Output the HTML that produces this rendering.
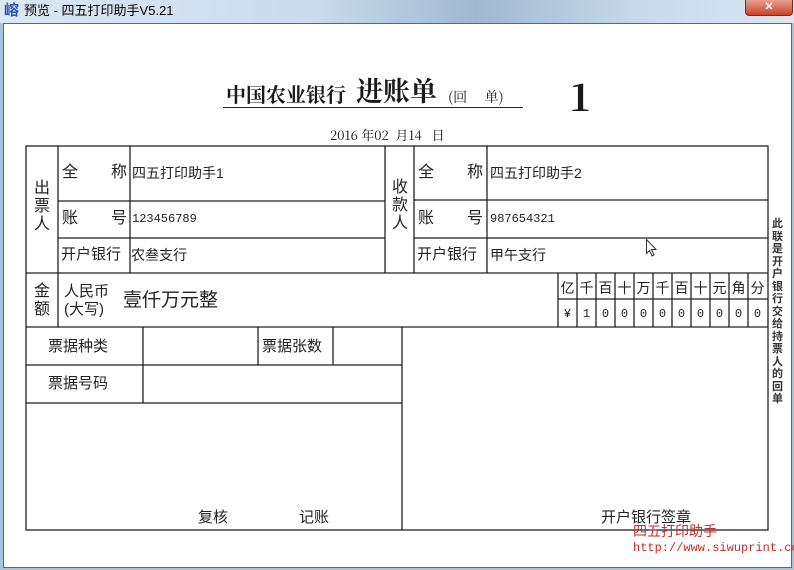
<!DOCTYPE html>
<html><head><meta charset="utf-8"><style>
body{margin:0;width:794px;height:570px;overflow:hidden;background:#a9c3dc;font-family:"Liberation Sans","Noto Sans CJK SC",sans-serif;position:relative}
.t{position:absolute;white-space:nowrap;color:#222;line-height:1}
.s{font-family:"Noto Serif CJK SC","Liberation Serif",serif}
</style></head><body>
<div style="position:absolute;left:0;top:0;width:794px;height:23px;background:linear-gradient(90deg,#dbe8f4 0%,#c9dbec 40%,#9fb8d0 60%,#c7d9ea 80%,#dbe7f3 100%)"></div>
<div class="t" style="left:4px;top:3px;font-size:15px;color:#2a4fb0;font-weight:bold">嵱</div>
<div class="t" style="left:24px;top:4px;font-size:13px;color:#000">预览 - 四五打印助手V5.21</div>
<div style="position:absolute;left:745px;top:0;width:46px;height:15px;background:linear-gradient(#e9a08f,#c8412a);border:1px solid #7a2a20;border-top:none;border-radius:0 0 4px 4px;color:#fff;font-size:11px;text-align:center;line-height:14px;font-weight:bold">✕</div>
<div style="position:absolute;left:3px;top:23px;width:787px;height:543px;background:#fff;border:1px solid #55677a"></div>

<div class="t s" style="left:226px;top:84px;font-size:20px;font-weight:bold;color:#1a1a1a">中国农业银行</div>
<div class="t s" style="left:356px;top:76px;font-size:27px;font-weight:bold;color:#1a1a1a">进账单</div>
<div class="t s" style="left:448px;top:90px;font-size:14px;color:#1a1a1a">(回　 单)</div>
<div style="position:absolute;left:223px;top:107px;width:300px;height:1px;background:#222"></div>
<div class="t s" style="left:569px;top:76px;font-size:38px;font-weight:bold;color:#1a1a1a">1</div>
<div class="t s" style="left:330px;top:128px;font-size:13px;color:#111">2016 年02 &nbsp;月14 &nbsp;&nbsp;日</div>

<svg width="794" height="570" style="position:absolute;left:0;top:0" stroke="#222" stroke-width="1.3" fill="none">
<rect x="26" y="146" width="742" height="384"/>
<line x1="26" y1="273" x2="768" y2="273"/>
<line x1="26" y1="327" x2="768" y2="327"/>
<line x1="58" y1="146" x2="58" y2="327"/>
<line x1="130" y1="146" x2="130" y2="273"/>
<line x1="385" y1="146" x2="385" y2="273"/>
<line x1="414" y1="146" x2="414" y2="273"/>
<line x1="487" y1="146" x2="487" y2="273"/>
<line x1="58" y1="201" x2="385" y2="201"/>
<line x1="58" y1="238" x2="385" y2="238"/>
<line x1="414" y1="200" x2="768" y2="200"/>
<line x1="414" y1="238" x2="768" y2="238"/>
<line x1="558" y1="299" x2="768" y2="299"/>
<line x1="558" y1="273" x2="558" y2="327"/>
<line x1="577" y1="273" x2="577" y2="327"/><line x1="596" y1="273" x2="596" y2="327"/><line x1="615" y1="273" x2="615" y2="327"/><line x1="634" y1="273" x2="634" y2="327"/><line x1="653" y1="273" x2="653" y2="327"/><line x1="672" y1="273" x2="672" y2="327"/><line x1="691" y1="273" x2="691" y2="327"/><line x1="710" y1="273" x2="710" y2="327"/><line x1="729" y1="273" x2="729" y2="327"/><line x1="748" y1="273" x2="748" y2="327"/>
<line x1="402" y1="327" x2="402" y2="530"/>
<line x1="26" y1="365" x2="402" y2="365"/>
<line x1="26" y1="403" x2="402" y2="403"/>
<line x1="143" y1="327" x2="143" y2="403"/>
<line x1="258" y1="327" x2="258" y2="365"/>
<line x1="333" y1="327" x2="333" y2="365"/>
<path d="M646.5 239.5 L646.5 253.5 L649.5 250.5 L652 256 L654 255 L651.5 249.5 L656 249.5 Z" stroke="#333" stroke-width="1" fill="#fff"/>
</svg>

<div class="t" style="left:34px;top:180px;font-size:16px;line-height:18px;width:16px">出<br>票<br>人</div>
<div class="t" style="left:392px;top:179px;font-size:16px;line-height:18px;width:16px">收<br>款<br>人</div>
<div class="t" style="left:34px;top:283px;font-size:16px;line-height:18px">金<br>额</div>

<div class="t" style="left:62px;top:165px;font-size:16px">全</div><div class="t" style="left:111px;top:165px;font-size:16px">称</div>
<div class="t" style="left:62px;top:211px;font-size:16px">账</div><div class="t" style="left:111px;top:211px;font-size:16px">号</div>
<div class="t" style="left:61px;top:247px;font-size:15px">开户银行</div>
<div class="t" style="left:132px;top:166px;font-size:14px">四五打印助手1</div>
<div class="t" style="left:132px;top:213px;font-size:12px;font-family:'Liberation Mono',monospace">123456789</div>
<div class="t" style="left:131px;top:248px;font-size:14px">农叁支行</div>

<div class="t" style="left:418px;top:165px;font-size:16px">全</div><div class="t" style="left:467px;top:165px;font-size:16px">称</div>
<div class="t" style="left:418px;top:211px;font-size:16px">账</div><div class="t" style="left:467px;top:211px;font-size:16px">号</div>
<div class="t" style="left:417px;top:247px;font-size:15px">开户银行</div>
<div class="t" style="left:490px;top:166px;font-size:14px">四五打印助手2</div>
<div class="t" style="left:490px;top:213px;font-size:12px;font-family:'Liberation Mono',monospace">987654321</div>
<div class="t" style="left:490px;top:248px;font-size:14px">甲午支行</div>

<div class="t" style="left:64px;top:283px;font-size:15px;line-height:18px">人民币<br>(大写)</div>
<div class="t" style="left:123px;top:291px;font-size:19px">壹仟万元整</div>

<div style="position:absolute;left:558px;top:278px;width:210px;display:flex;font-size:14px;color:#222">
<span style="width:19px;text-align:center">亿</span><span style="width:19px;text-align:center">千</span><span style="width:19px;text-align:center">百</span><span style="width:19px;text-align:center">十</span><span style="width:19px;text-align:center">万</span><span style="width:19px;text-align:center">千</span><span style="width:19px;text-align:center">百</span><span style="width:19px;text-align:center">十</span><span style="width:19px;text-align:center">元</span><span style="width:19px;text-align:center">角</span><span style="width:19px;text-align:center">分</span></div>
<div style="position:absolute;left:558px;top:307px;width:210px;display:flex;font-size:12px;font-family:'Liberation Mono',monospace;color:#222">
<span style="width:19px;text-align:center">¥</span><span style="width:19px;text-align:center">1</span><span style="width:19px;text-align:center">0</span><span style="width:19px;text-align:center">0</span><span style="width:19px;text-align:center">0</span><span style="width:19px;text-align:center">0</span><span style="width:19px;text-align:center">0</span><span style="width:19px;text-align:center">0</span><span style="width:19px;text-align:center">0</span><span style="width:19px;text-align:center">0</span><span style="width:19px;text-align:center">0</span></div>

<div class="t" style="left:48px;top:339px;font-size:15px">票据种类</div>
<div class="t" style="left:262px;top:339px;font-size:15px">票据张数</div>
<div class="t" style="left:48px;top:376px;font-size:15px">票据号码</div>
<div class="t" style="left:198px;top:510px;font-size:15px">复核</div>
<div class="t" style="left:299px;top:510px;font-size:15px">记账</div>
<div class="t" style="left:601px;top:510px;font-size:15px">开户银行签章</div>

<div class="t" style="left:772px;top:218px;font-size:11px;line-height:12.5px;width:12px;font-weight:bold;color:#333">此<br>联<br>是<br>开<br>户<br>银<br>行<br>交<br>给<br>持<br>票<br>人<br>的<br>回<br>单</div>

<div class="t" style="left:633px;top:524px;font-size:14px;color:#c0302a">四五打印助手</div>
<div class="t" style="left:633px;top:542px;font-size:12px;color:#c0302a;font-family:'Liberation Mono',monospace">http://www.siwuprint.co</div>
</body></html>
